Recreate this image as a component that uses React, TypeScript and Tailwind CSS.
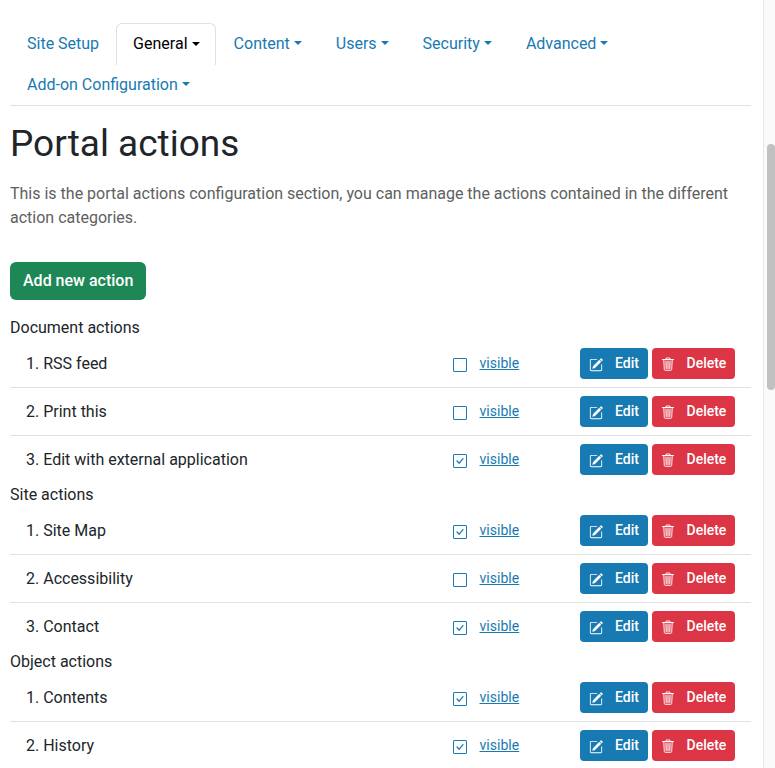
import React from "react";

const tabs = ["Site Setup", "General", "Content", "Users", "Security", "Advanced", "Add-on Configuration"];

const groups: { title: string; items: [string, boolean][] }[] = [
  { title: "Document actions", items: [["RSS feed", false], ["Print this", false], ["Edit with external application", true]] },
  { title: "Site actions", items: [["Site Map", true], ["Accessibility", false], ["Contact", true]] },
  { title: "Object actions", items: [["Contents", true], ["History", true]] },
];

function Box({ checked }: { checked: boolean }) {
  return (
    <svg width="14" height="14" viewBox="0 0 14 14" fill="none" stroke="currentColor" className="mt-[10px]">
      <rect x=".5" y=".5" width="13" height="13" rx=".5" />
      {checked && <path d="m4 7 2.2 2.2L10 4.7" strokeWidth="1.3" strokeLinecap="round" strokeLinejoin="round" />}
    </svg>
  );
}

function EditIcon() {
  return (
    <svg width="14" height="14" viewBox="0 0 16 16" fill="currentColor" className="mt-[9.5px]">
      <path d="M15.502 1.94a.5.5 0 0 1 0 .706L14.459 3.69l-2-2L13.502.646a.5.5 0 0 1 .707 0l1.293 1.293zm-1.75 2.456-2-2L4.939 9.21a.5.5 0 0 0-.121.196l-.805 2.414a.25.25 0 0 0 .316.316l2.414-.805a.5.5 0 0 0 .196-.12l6.813-6.814z" stroke="currentColor" strokeWidth=".35" />
      <path d="M1 13.5A1.5 1.5 0 0 0 2.5 15h11a1.5 1.5 0 0 0 1.5-1.5v-6a.5.5 0 0 0-1 0v6a.5.5 0 0 1-.5.5h-11a.5.5 0 0 1-.5-.5v-11a.5.5 0 0 1 .5-.5H9a.5.5 0 0 0 0-1H2.5A1.5 1.5 0 0 0 1 2.5z" />
    </svg>
  );
}

function TrashIcon() {
  return (
    <svg width="14" height="14" viewBox="0 0 14 14" fill="none" stroke="currentColor" className="mt-[9px]">
      <path d="M2.8 3h8.400l-.7 10h-7z" fill="currentColor" fillOpacity=".2" stroke="none" />
      <path d="M1.500 2.500h11" strokeWidth="1.200" strokeLinecap="round" />
      <path d="M5 2V1h4v1M2.700 3l.6 9.500q.1.900 1 .9h5.400q.9 0 1-.9L11.300 3M5 4.500l.3 7M7 4.500v7M9 4.500l-.3 7" strokeWidth=".85" strokeLinecap="round" />
    </svg>
  );
}

export default function App() {
  return (
    <div className="flex h-[768px] w-[775px] overflow-hidden bg-white font-[Roboto,sans-serif] text-base leading-6 text-[#212529]">
      <main className="ml-[10px] w-[741px] shrink-0 pt-[23px]">
        <nav className="flex flex-wrap border-b border-[#dee2e6]">
          {tabs.map((tab, i) => (
            <a
              key={tab}
              className={
                i === 1
                  ? "-mb-px mr-[0.5px] flex h-[42px] w-[100px] items-center rounded-t-md border border-b-0 border-[#dee2e6] px-4 pb-px text-black"
                  : "flex h-[41px] items-center border border-transparent px-4 text-[#177ab2]"
              }
            >
              {tab}
              {i > 0 && <span className="mb-px ml-1 border-x-[4.8px] border-t-[4.8px] border-x-transparent border-t-current" />}
            </a>
          ))}
        </nav>
        <h1 className="mt-[15px] text-[37px] leading-[46px]">Portal actions</h1>
        <p className="mt-[15px] text-[#5e6061]">
          This is the portal actions configuration section, you can manage the actions contained in the different action categories.
        </p>
        <button className="mt-8 h-[38px] rounded-md bg-[#1e8756] px-[13px] pb-px font-medium text-white">Add new action</button>
        <div className="mt-4">
          {groups.map((g) => (
            <section key={g.title}>
              <h2 className="h-6">{g.title}</h2>
              {g.items.map(([name, on], i) => (
                <div key={name} className={i < g.items.length - 1 ? "flex h-12 border-b border-[#dee2e6] pl-4 pt-2" : "flex h-[47px] pl-4 pt-2"}>
                  <span className="w-[427px] pt-1">{i + 1}. {name}</span>
                  <a className="flex w-[127px] text-sm text-[#177ab2]">
                    <Box checked={on} />
                    <span className="ml-[12.5px] pt-[3px] leading-6 tracking-[0.03px] underline">visible</span>
                  </a>
                  <button className="flex h-[31px] w-[68px] gap-3 rounded bg-[#177ab2] pl-[9px] text-sm font-medium leading-[31px] text-white"><EditIcon />Edit</button>
                  <button className="ml-1 flex h-[31px] w-[83px] gap-3 rounded bg-[#dc3545] pl-[8.5px] text-sm font-medium leading-[31px] text-white"><TrashIcon />Delete</button>
                </div>
              ))}
            </section>
          ))}
        </div>
      </main>
      <div className="ml-3 w-3 border-l border-[#e8e8e8] bg-[#fafafa] pl-[3px] pt-36">
        <div className="h-[246px] w-2 rounded-full bg-[#c1c1c1]" />
      </div>
    </div>
  );
}
